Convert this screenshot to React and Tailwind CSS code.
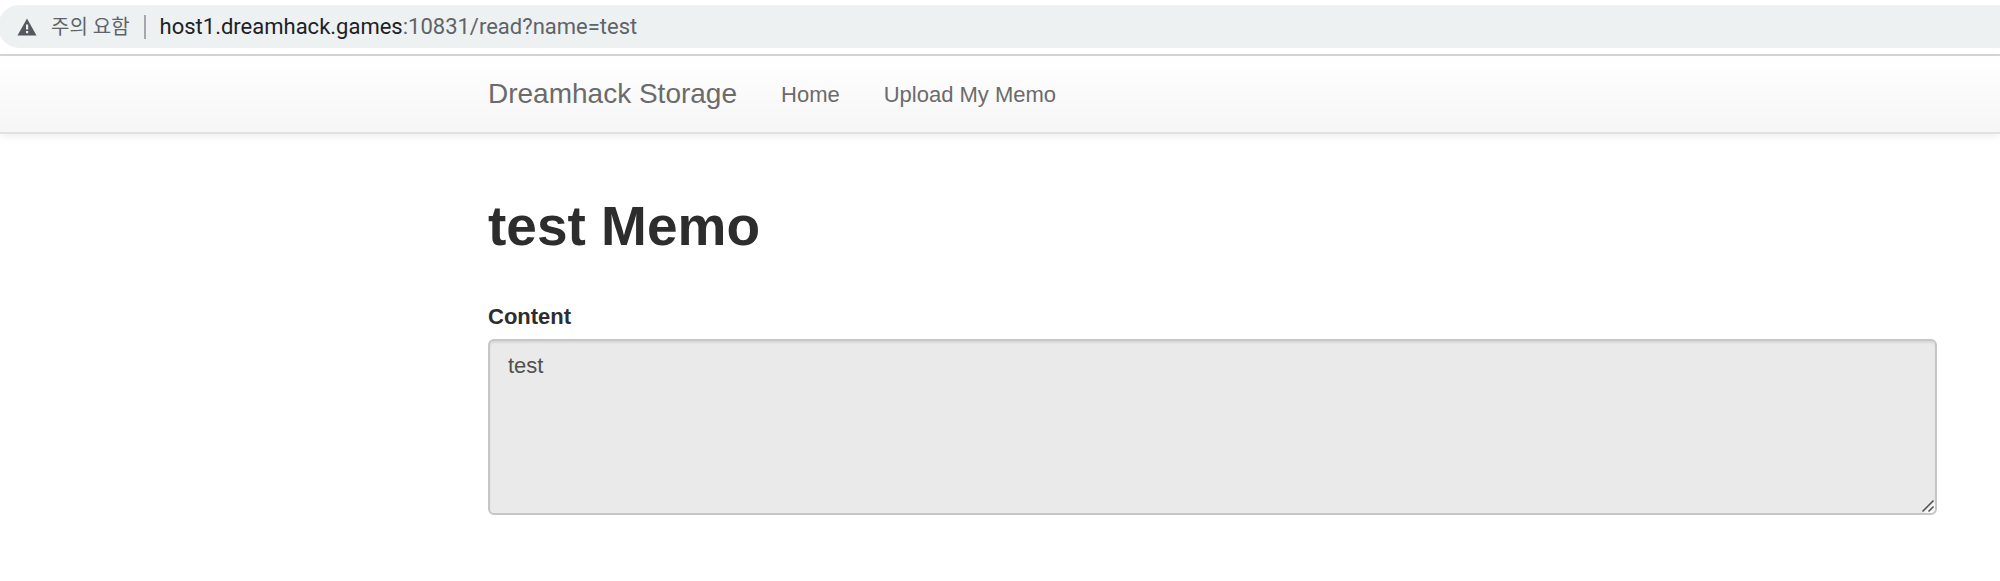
function WarningIcon() {
  return (
    <svg viewBox="0 0 20 18" className="h-[18px] w-5 shrink-0" aria-hidden="true">
      <path d="M10 0.5 L19.5 17.5 H0.5 Z" fill="#55595d" />
      <rect x="9" y="6.5" width="2.2" height="5" fill="#edf1f2" />
      <rect x="9" y="13" width="2.2" height="2.2" fill="#edf1f2" />
    </svg>
  );
}

function AddressBar() {
  return (
    <div className="border-b-2 border-[#d5d7dc] bg-white pt-[5px] pb-[6px] font-[Roboto,'Noto_Sans_CJK_KR',sans-serif] text-[22px] leading-none">
      <div className="-ml-0.5 flex h-[43px] items-center rounded-l-full bg-[#edf1f2] pl-[19px]">
        <WarningIcon />
        <span className="ml-3.5 text-xl leading-none text-[#5f6368]">주의 요함</span>
        <span className="ml-3.5 h-6 w-0.5 bg-[#a5a8ab]" />
        <span className="ml-3.5 text-[#5f6368]">
          <span className="text-[#202124]">host1.dreamhack.games</span>
          :10831/read?name=test
        </span>
      </div>
    </div>
  );
}

function NavBar() {
  return (
    <nav className="flex h-[78px] items-center border-b-2 border-[#e2e2e2] bg-linear-to-b from-white to-[#f6f6f6] pl-[488px] text-[22px] text-[#6b6b6b] shadow-[0_2px_8px_rgba(0,0,0,0.075)]">
      <a href="#" className="text-[28px]">Dreamhack Storage</a>
      <a href="#" className="ml-11">Home</a>
      <a href="#" className="ml-11">Upload My Memo</a>
    </nav>
  );
}

export default function App() {
  return (
    <div className="min-h-screen bg-white font-['Liberation_Sans',Arial,sans-serif] text-[#2d2d2d]">
      <AddressBar />
      <NavBar />
      <main className="pr-[63px] pl-[488px]">
        <h1 className="pt-[62px] text-[55px] leading-[60px] font-bold">test Memo</h1>
        <label htmlFor="content" className="mt-[45px] block text-[22px] leading-8 font-bold">
          Content
        </label>
        <div className="relative mt-1.5">
          <textarea
            id="content"
            readOnly
            defaultValue="test"
            className="block h-44 w-full resize-none rounded-md border-2 border-[#c6c6c6] bg-[#eaeaea] px-[18px] py-[9px] text-[22px] leading-8 text-[#505050] shadow-[inset_0_2px_2px_rgba(0,0,0,0.075)] outline-none"
          />
          <svg viewBox="0 0 14 14" className="pointer-events-none absolute right-0.5 bottom-0.5 size-3.5" aria-hidden="true">
            <path d="M3 14 L14 3 V11 L11 14 Z" fill="#f8f8f8" />
            <path d="M1.5 12.5 L12.5 1.5 M7.5 12.5 L12.5 7.5" stroke="#505050" strokeWidth="1.5" fill="none" />
          </svg>
        </div>
      </main>
    </div>
  );
}
